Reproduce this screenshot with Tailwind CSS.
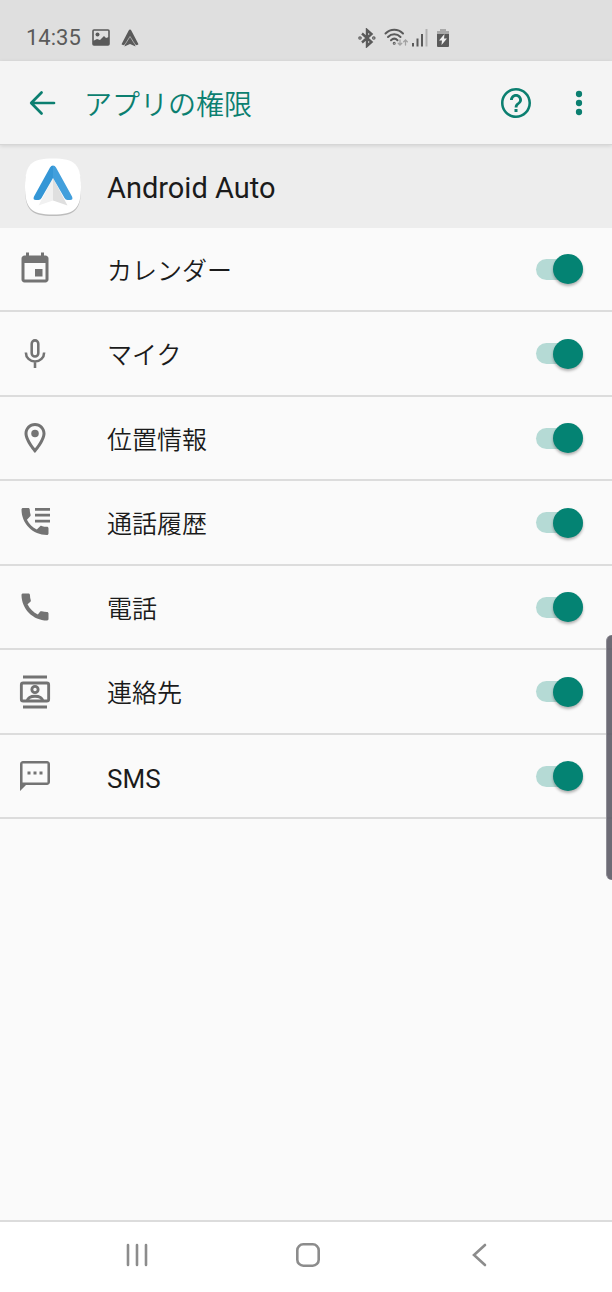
<!DOCTYPE html>
<html lang="ja">
<head>
    <meta charset="UTF-8">
    <meta name="viewport" content="width=device-width, initial-scale=1.0">
    <title>アプリの権限</title>
    <script src="https://cdn.jsdelivr.net/npm/@tailwindcss/browser@4"></script>
</head>
<body class="relative flex flex-col min-h-screen bg-[#fafafa] text-[#1b1b1b] font-['Roboto','Noto_Sans_CJK_JP',sans-serif]">

    <!-- Status bar -->
    <div class="grid grid-cols-[1fr_254px] items-center h-[61px] pt-[14px] pl-[26px] bg-[#dfdfdf] text-[#5a5a5a]">
        <div class="flex items-center gap-[11px]">
            <span class="text-[22px] leading-6">14:35</span>
            <svg class="w-[18px] h-[18px]" viewBox="0 0 18 18" fill="none">
                <rect x="1" y="1" width="16" height="15" rx="1" stroke="currentColor" stroke-width="1.6"/>
                <circle cx="5.5" cy="5.5" r="2" fill="currentColor"/>
                <path d="M1 12l4-2 3 1 4-4 2 2 3-1v8H1z" fill="currentColor"/>
            </svg>
            <svg class="w-[18px] h-[18px]" viewBox="0 0 18 18">
                <path d="M9 .5c.6 0 1 .3 1.300.9L17.500 15.200 15.800 16.200 13.800 15.200 14.600 17.500 9 15 3.400 17.500 4.200 15.200 2.200 16.200.5 15.200 7.700 1.400C8 .8 8.400.5 9 .5z" fill="currentColor"/>
                <path d="M4 15.500L9 7.500l5 8" fill="none" stroke="#bdbdbd" stroke-width=".8"/>
            </svg>
        </div>
        <div class="flex items-center">
            <svg class="w-[18px] h-5" viewBox="0 0 18 20" fill="none" stroke="currentColor" stroke-width="2.400">
                <path d="M4 5.500l9.500 8.500-4.500 4V2l4.500 4L4 14.500"/>
                <circle cx="2" cy="10" r=".6"/><circle cx="15.800" cy="10" r=".6"/>
            </svg>
            <svg class="w-6 h-5 ml-2" viewBox="0 0 24 20" fill="none" stroke="currentColor" stroke-width="2" stroke-linecap="round">
                <path d="M1.500 5.500c5-5 12.500-5 17.500 0M4 9c3.500-3.600 9-3.600 12.500 0M7 12.200c2-1.900 4.600-1.900 6.500 0"/>
                <circle cx="10.200" cy="15.200" r=".5"/>
                <path d="M16 12v5m-1.800-1.700L16 17l1.800-1.700M21.500 17v-5m-1.800 1.700l1.800-1.700 1.800 1.700" stroke="#a2a2a2" stroke-width="1.300"/>
            </svg>
            <svg class="w-4 h-5 ml-1" viewBox="0 0 16 20" stroke="currentColor" stroke-width="2">
                <path d="M1 15v3.500M5.500 10.500v8M10 6v12.500"/>
                <path d="M14.500 1v17.500" stroke="#b2b2b2"/>
            </svg>
            <svg class="w-[14px] h-5 ml-2" viewBox="0 0 14 20">
                <path d="M4 1h6v2h3v4H1V3h3z" fill="#a9a9a9"/>
                <path d="M1 6h12v12q0 1-1 1H2q-1 0-1-1z" fill="currentColor"/>
                <path d="M8.500 6L3 12.500h3L5.500 17l5.500-6.500H8z" fill="#efefef"/>
            </svg>
        </div>
    </div>

    <!-- App bar -->
    <header class="relative flex items-center h-[84px] pl-6 pr-[15px] bg-[#f4f4f4] text-[#0b7f70] border-b border-[#d6d6d6] shadow-[0_1px_4px_rgba(0,0,0,0.12)]">
        <button type="button" aria-label="戻る">
            <svg class="size-9" viewBox="0 0 24 24" fill="none" stroke="currentColor" stroke-width="1.800" stroke-linecap="round" stroke-linejoin="round">
                <path d="M20 12H4.900M11.700 5L4.800 12l6.900 7"/>
            </svg>
        </button>
        <h1 class="flex-1 pt-[6px] ml-6 text-[28px] leading-9 font-[350]">アプリの権限</h1>
        <button type="button" aria-label="ヘルプ">
            <svg class="size-9" viewBox="0 0 24 24" fill="currentColor">
                <path d="M11 18h2v-2h-2v2zm1-16C6.480 2 2 6.480 2 12s4.480 10 10 10 10-4.480 10-10S17.520 2 12 2zm0 18.300c-4.600 0-8.300-3.700-8.300-8.300S7.400 3.700 12 3.700s8.300 3.700 8.300 8.300-3.700 8.300-8.300 8.300zM12 6c-2.210 0-4 1.790-4 4h1.900c0-1.160.94-2.100 2.100-2.100s2.100.94 2.100 2.100c0 2-3 1.750-3 5h1.900c0-2.250 3-2.500 3-5 0-2.210-1.790-4-4-4z"/>
            </svg>
        </button>
        <button type="button" aria-label="その他" class="ml-[27px]">
            <svg class="size-9" viewBox="0 0 24 24" fill="currentColor">
                <circle cx="12" cy="6" r="2.100"/><circle cx="12" cy="12" r="2.100"/><circle cx="12" cy="18" r="2.100"/>
            </svg>
        </button>
    </header>

    <!-- App name -->
    <div class="flex items-center h-[83px] pl-[23px] bg-[#ededed]">
        <svg class="size-[60px]" viewBox="0 0 60 60">
            <path d="M30 3C8 3 2 9 2 31s6 28 28 28 28-6 28-28S52 3 30 3z" fill="#bdbdbd"/>
            <path d="M30 1.500C8 1.500 2 7.500 2 29.500s6 28 28 28 28-6 28-28-6-28-28-28z" fill="#fff"/>
            <path d="M30 21L15.500 48.500l14.500-5z" fill="#f1f1f1"/>
            <path d="M30 21L44.500 48.500l-14.500-5z" fill="#dfdfdf"/>
            <path d="M30 8.500q-2 0-3 2L11 39.500q-1.500 3.500 2 3.500h2.500q2 0 3-2L30 21z" fill="#3496d6"/>
            <path d="M30 8.500q2 0 3 2L49 39.500q1.500 3.500-2 3.500h-2.500q-2 0-3-2L30 21z" fill="#429fdc"/>
        </svg>
        <h2 class="pt-[2px] ml-6 text-[29px] leading-9">Android Auto</h2>
    </div>

    <!-- Permissions -->
    <main class="flex-1 text-[25px] leading-9 font-[350]">
        <ul>
            <li class="odd:h-[84px] even:h-[85px] border-b-2 border-[#dcdcdc]">
                <label class="flex items-center h-full pl-[17px] pr-[29px]">
                    <svg class="size-9 text-[#737373]" viewBox="0 0 24 24" fill="currentColor">
                        <path d="M17 12h-5v5h5v-5zM16 1v2H8V1H6v2H5c-1.110 0-1.990.9-1.990 2L3 19c0 1.100.89 2 2 2h14c1.100 0 2-.9 2-2V5c0-1.100-.9-2-2-2h-1V1h-2zm3 18H5V8h14v11z"/>
                    </svg>
                    <span class="flex-1 pt-[5px] ml-[54px]">カレンダー</span>
                    <input type="checkbox" role="switch" checked class="appearance-none flex items-center w-[47px] h-[21px] rounded-full bg-[#c4c4c4] checked:justify-end checked:bg-[#b5dad5] before:size-[30px] before:shrink-0 before:rounded-full before:bg-white checked:before:bg-[#048373] before:shadow-[0_2px_3px_rgba(0,0,0,0.3)]">
                </label>
            </li>
            <li class="odd:h-[84px] even:h-[85px] border-b-2 border-[#dcdcdc]">
                <label class="flex items-center h-full pl-[17px] pr-[29px]">
                    <svg class="size-9 text-[#737373]" viewBox="0 0 24 24" fill="none" stroke="currentColor" stroke-width="1.700">
                        <rect x="9.800" y="2.900" width="4.400" height="10.800" rx="2.200"/>
                        <path d="M5.900 11c0 3.400 2.700 6 6.100 6s6.100-2.600 6.100-6M12 17v4.300"/>
                    </svg>
                    <span class="flex-1 pt-[5px] ml-[54px]">マイク</span>
                    <input type="checkbox" role="switch" checked class="appearance-none flex items-center w-[47px] h-[21px] rounded-full bg-[#c4c4c4] checked:justify-end checked:bg-[#b5dad5] before:size-[30px] before:shrink-0 before:rounded-full before:bg-white checked:before:bg-[#048373] before:shadow-[0_2px_3px_rgba(0,0,0,0.3)]">
                </label>
            </li>
            <li class="odd:h-[84px] even:h-[85px] border-b-2 border-[#dcdcdc]">
                <label class="flex items-center h-full pl-[17px] pr-[29px]">
                    <svg class="size-9 text-[#737373]" viewBox="0 0 24 24" fill="currentColor">
                        <path d="M12 2C8.130 2 5 5.130 5 9c0 5.250 7 13 7 13s7-7.750 7-13c0-3.870-3.130-7-7-7zM7 9c0-2.760 2.240-5 5-5s5 2.240 5 5c0 2.880-2.880 7.190-5 9.880C9.920 16.210 7 11.850 7 9z"/>
                        <circle cx="12" cy="9" r="2.500"/>
                    </svg>
                    <span class="flex-1 pt-[5px] ml-[54px]">位置情報</span>
                    <input type="checkbox" role="switch" checked class="appearance-none flex items-center w-[47px] h-[21px] rounded-full bg-[#c4c4c4] checked:justify-end checked:bg-[#b5dad5] before:size-[30px] before:shrink-0 before:rounded-full before:bg-white checked:before:bg-[#048373] before:shadow-[0_2px_3px_rgba(0,0,0,0.3)]">
                </label>
            </li>
            <li class="odd:h-[84px] even:h-[85px] border-b-2 border-[#dcdcdc]">
                <label class="flex items-center h-full pl-[17px] pr-[29px]">
                    <svg class="size-9 text-[#737373]" viewBox="0 0 24 24" fill="currentColor">
                        <path d="M20 14.500c-1.250 0-2.450-.2-3.570-.57-.35-.11-.74-.03-1.020.24l-2.200 2.200c-2.830-1.440-5.150-3.750-6.590-6.580l2.200-2.210c.28-.27.36-.66.25-1.010C8.700 5.450 8.500 4.250 8.500 3c0-.55-.45-1-1-1H4c-.55 0-1 .45-1 1 0 9.390 7.610 17 17 17 .55 0 1-.45 1-1v-3.500c0-.55-.45-1-1-1zM12 2h10v1.800H12zM12 5.900h10v1.800H12zM12 9.800h10v1.800H12z"/>
                    </svg>
                    <span class="flex-1 pt-[5px] ml-[54px]">通話履歴</span>
                    <input type="checkbox" role="switch" checked class="appearance-none flex items-center w-[47px] h-[21px] rounded-full bg-[#c4c4c4] checked:justify-end checked:bg-[#b5dad5] before:size-[30px] before:shrink-0 before:rounded-full before:bg-white checked:before:bg-[#048373] before:shadow-[0_2px_3px_rgba(0,0,0,0.3)]">
                </label>
            </li>
            <li class="odd:h-[84px] even:h-[85px] border-b-2 border-[#dcdcdc]">
                <label class="flex items-center h-full pl-[17px] pr-[29px]">
                    <svg class="size-9 text-[#737373]" viewBox="0 0 24 24" fill="currentColor">
                        <path d="M20.010 15.380c-1.230 0-2.420-.2-3.530-.56-.35-.12-.74-.03-1.010.24l-1.570 1.970c-2.830-1.350-5.480-3.900-6.890-6.830l1.950-1.660c.27-.28.35-.67.24-1.020-.37-1.110-.56-2.300-.56-3.530 0-.54-.45-.99-.99-.99H4.190C3.650 3 3 3.240 3 3.990 3 13.280 10.730 21 20.010 21c.71 0 .99-.63.99-1.180v-3.450c0-.54-.45-.99-.99-.99z"/>
                    </svg>
                    <span class="flex-1 pt-[5px] ml-[54px]">電話</span>
                    <input type="checkbox" role="switch" checked class="appearance-none flex items-center w-[47px] h-[21px] rounded-full bg-[#c4c4c4] checked:justify-end checked:bg-[#b5dad5] before:size-[30px] before:shrink-0 before:rounded-full before:bg-white checked:before:bg-[#048373] before:shadow-[0_2px_3px_rgba(0,0,0,0.3)]">
                </label>
            </li>
            <li class="odd:h-[84px] even:h-[85px] border-b-2 border-[#dcdcdc]">
                <label class="flex items-center h-full pl-[17px] pr-[29px]">
                    <svg class="size-9 text-[#737373]" viewBox="0 0 24 24" fill="none" stroke="currentColor" stroke-width="1.900">
                        <path d="M4 2h16M4 22h16"/>
                        <rect x="2.900" y="6" width="18.200" height="12" rx="1.200"/>
                        <circle cx="12" cy="10.300" r="2.100"/>
                        <path d="M6.800 17.800c1-4 9.400-4 10.400 0"/>
                    </svg>
                    <span class="flex-1 pt-[5px] ml-[54px]">連絡先</span>
                    <input type="checkbox" role="switch" checked class="appearance-none flex items-center w-[47px] h-[21px] rounded-full bg-[#c4c4c4] checked:justify-end checked:bg-[#b5dad5] before:size-[30px] before:shrink-0 before:rounded-full before:bg-white checked:before:bg-[#048373] before:shadow-[0_2px_3px_rgba(0,0,0,0.3)]">
                </label>
            </li>
            <li class="odd:h-[84px] even:h-[85px] border-b-2 border-[#dcdcdc]">
                <label class="flex items-center h-full pl-[17px] pr-[29px]">
                    <svg class="size-9 text-[#737373]" viewBox="0 0 24 24" fill="currentColor">
                        <path d="M20 2H4c-1.100 0-2 .9-2 2v18l4-4h14c1.100 0 2-.9 2-2V4c0-1.100-.9-2-2-2zm.3 14.300H3.700V3.700h16.600v12.600zM7 9h2v2H7zM11 9h2v2h-2zM15 9h2v2h-2z"/>
                    </svg>
                    <span class="flex-1 pt-[5px] ml-[54px] text-[26px] font-normal">SMS</span>
                    <input type="checkbox" role="switch" checked class="appearance-none flex items-center w-[47px] h-[21px] rounded-full bg-[#c4c4c4] checked:justify-end checked:bg-[#b5dad5] before:size-[30px] before:shrink-0 before:rounded-full before:bg-white checked:before:bg-[#048373] before:shadow-[0_2px_3px_rgba(0,0,0,0.3)]">
                </label>
            </li>
        </ul>
    </main>

    <!-- Edge panel handle -->
    <div class="absolute right-0 top-[635px] w-[6px] h-[245px] rounded-l-lg bg-[#5d5b66]/90 border-l border-[#8f8e96]"></div>

    <!-- Navigation bar -->
    <nav class="flex justify-center h-[72px] pl-1 pb-1 bg-white border-t-2 border-[#dcdcdc] text-[#8c8c8c]">
        <button type="button" aria-label="履歴" class="flex items-center justify-center w-[171px]">
            <svg class="size-7" viewBox="0 0 28 28" fill="none" stroke="currentColor" stroke-width="2.600" stroke-linecap="round">
                <path d="M5 4v20M14 4v20M23 4v20"/>
            </svg>
        </button>
        <button type="button" aria-label="ホーム" class="flex items-center justify-center w-[171px]">
            <svg class="size-7" viewBox="0 0 28 28" fill="none" stroke="currentColor" stroke-width="2.600">
                <rect x="3.300" y="3.300" width="21.400" height="21.400" rx="6"/>
            </svg>
        </button>
        <button type="button" aria-label="戻る" class="flex items-center justify-center w-[171px]">
            <svg class="size-7" viewBox="0 0 28 28" fill="none" stroke="currentColor" stroke-width="2.600" stroke-linecap="round">
                <path d="M20 4L9 14l11 10"/>
            </svg>
        </button>
    </nav>
</body>
</html>
